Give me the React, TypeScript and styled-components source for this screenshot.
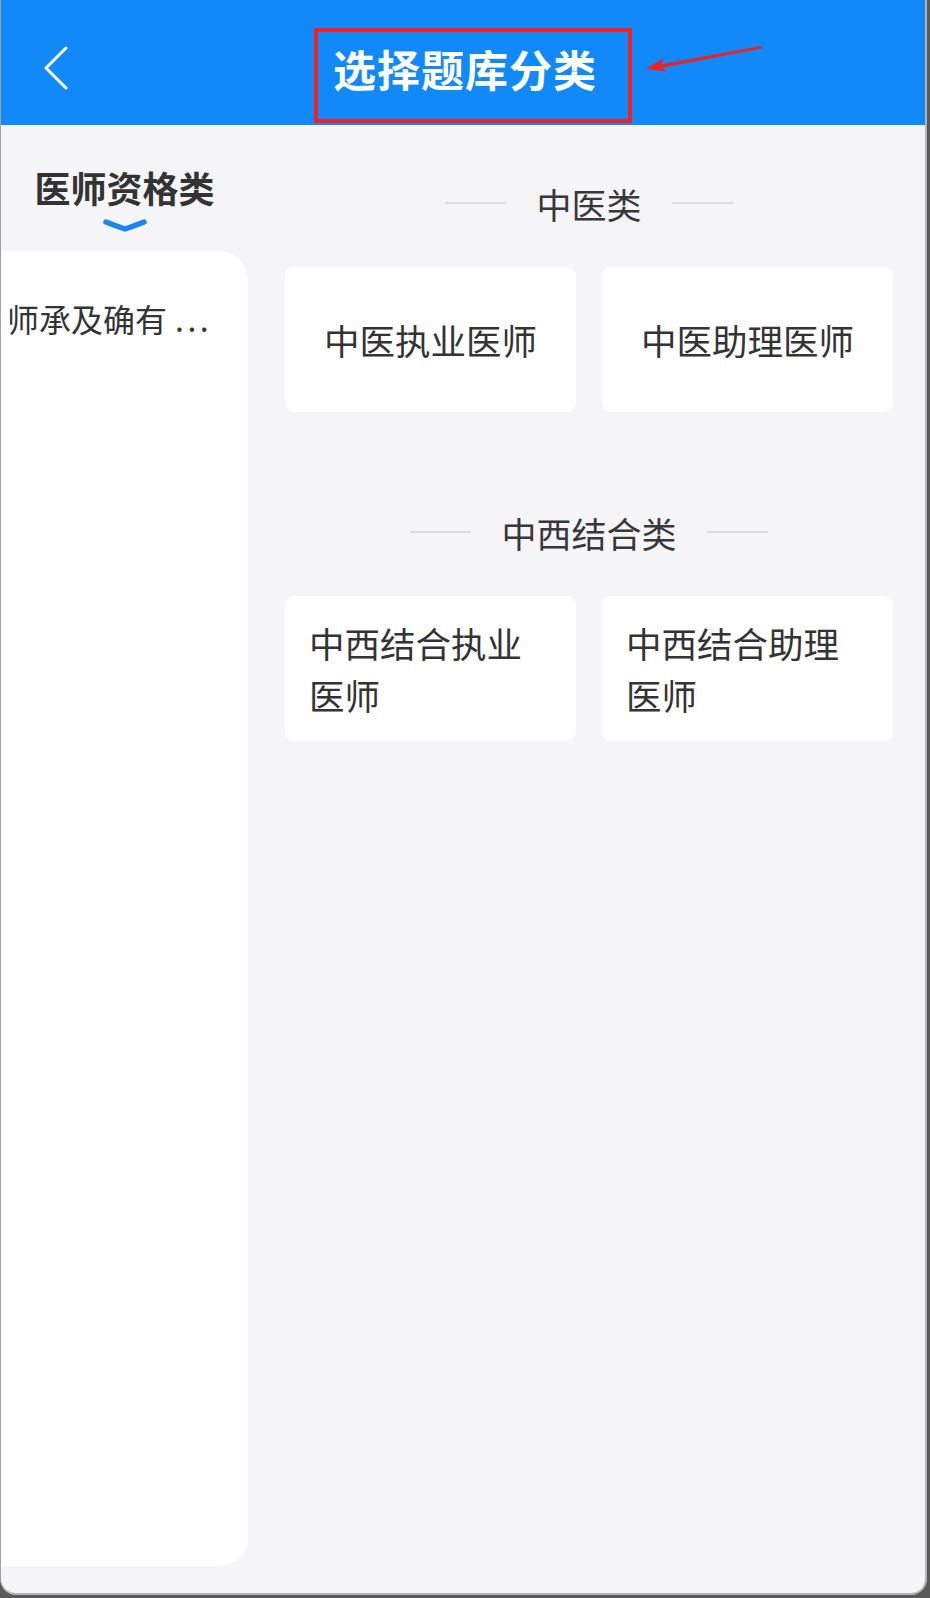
import React from "react";
import styled, { createGlobalStyle } from "styled-components";

const GlobalStyle = createGlobalStyle`
    html, body {
        margin: 0;
        padding: 0;
        background: #5a5a5a;
    }
    body {
        font-family: "Noto Sans CJK SC", "Noto Sans", sans-serif;
        color: #333;
    }
`;

const Screen = styled.div`
    position: relative;
    width: 927px;
    height: 1595px;
    box-sizing: border-box;
    background: #f5f5f7;
    border-left: 1px solid #a2a2a2;
    border-right: 2px solid #b4b4b4;
    border-bottom: 2px solid #b4b4b4;
    border-radius: 0 0 16px 16px;
    overflow: hidden;
    display: flex;
    flex-direction: column;
`;

const NavBar = styled.header`
    height: 125px;
    flex: none;
    box-sizing: border-box;
    padding-top: 10px;
    background: #1289f8;
    display: grid;
    grid-template-columns: 1fr auto 1fr;
    align-items: center;
`;

const BackButton = styled.button`
    justify-self: start;
    margin-left: 42px;
    padding: 0;
    border: none;
    background: none;
    display: flex;
    cursor: pointer;
`;

const Title = styled.h1`
    margin: 0;
    padding-left: 4px;
    font-size: 43px;
    font-weight: 700;
    line-height: 60px;
    color: #fff;
    letter-spacing: 1px;
`;

// red annotation drawn over the screenshot
const MarkBox = styled.div`
    position: absolute;
    left: 313px;
    top: 28px;
    width: 318px;
    height: 95px;
    box-sizing: border-box;
    border: 4px solid #ee2222;
`;

const MarkArrow = styled.svg`
    position: absolute;
    left: 640px;
    top: 40px;
`;

const Body = styled.div`
    flex: 1;
    display: flex;
    min-height: 0;
`;

const Sidebar = styled.aside`
    width: 247px;
    flex: none;
    display: flex;
    flex-direction: column;
    align-items: center;
    padding: 37px 0 27px;
    box-sizing: border-box;
`;

const Tab = styled.div`
    font-size: 36px;
    font-weight: 700;
    line-height: 50px;
    color: #333;
`;

const TabMark = styled.svg`
    margin-top: 5px;
    display: block;
`;

const Panel = styled.div`
    align-self: stretch;
    flex: 1;
    margin-top: 18px;
    background: #fff;
    border-radius: 0 30px 28px 0;
    padding-top: 42px;
    overflow: hidden;
`;

const PanelItem = styled.div`
    padding-left: 6px;
    font-size: 32px;
    line-height: 50px;
    color: #333;
    white-space: nowrap;
`;

const Ellipsis = styled.span`
    margin-left: 8px;
    letter-spacing: 3.5px;
`;

const Main = styled.main`
    flex: 1;
    padding: 43px 32px 0 37px;
    display: flex;
    flex-direction: column;
    gap: 85px;
`;

const Section = styled.section`
    display: flex;
    flex-direction: column;
`;

const SectionTitle = styled.div`
    height: 70px;
    display: flex;
    align-items: center;
    justify-content: center;
    gap: 30px;
    font-size: 35px;
    color: #383838;

    &::before, &::after {
        content: "";
        width: 61px;
        height: 1.5px;
        background: #dcdcdc;
    }
`;

const CardGrid = styled.div`
    margin-top: 29px;
    display: grid;
    grid-template-columns: 1fr 1fr;
    gap: 26px;
`;

const Card = styled.div`
    height: 145px;
    box-sizing: border-box;
    padding: 0 24px;
    background: #fff;
    border-radius: 9px;
    display: flex;
    align-items: center;
    justify-content: center;
`;

const CardText = styled.span`
    font-size: 35.5px;
    line-height: 52px;
    color: #333;
    text-align: left;
`;

const groups = [
    { name: "中医类", items: ["中医执业医师", "中医助理医师"] },
    { name: "中西结合类", items: ["中西结合执业医师", "中西结合助理医师"] },
];

export default function App() {
    return (
        <>
            <GlobalStyle />
            <Screen>
                <NavBar>
                    <BackButton aria-label="返回">
                        <svg width="26" height="44" viewBox="0 0 26 44">
                            <polyline points="23,2 3,22 23,42" fill="none" stroke="#fff" strokeWidth="3" strokeLinecap="round" strokeLinejoin="round" />
                        </svg>
                    </BackButton>
                    <Title>选择题库分类</Title>
                    <div />
                </NavBar>
                <Body>
                    <Sidebar>
                        <Tab>医师资格类</Tab>
                        <TabMark width="46" height="16" viewBox="0 0 46 16">
                            <path d="M4 5 Q 14 9 23 12 Q 32 9 42 5" fill="none" stroke="#1a86f0" strokeWidth="5.5" strokeLinecap="round" strokeLinejoin="round" />
                        </TabMark>
                        <Panel>
                            <PanelItem>师承及确有<Ellipsis>...</Ellipsis></PanelItem>
                        </Panel>
                    </Sidebar>
                    <Main>
                        {groups.map(g => (
                            <Section key={g.name}>
                                <SectionTitle>{g.name}</SectionTitle>
                                <CardGrid>
                                    {g.items.map(item => (
                                        <Card key={item}>
                                            <CardText>{item}</CardText>
                                        </Card>
                                    ))}
                                </CardGrid>
                            </Section>
                        ))}
                    </Main>
                </Body>
                <MarkBox />
                <MarkArrow width="125" height="40" viewBox="0 0 125 40">
                    <polygon points="120,6 121,8.5 17,28.5 16,25" fill="#ee2222" />
                    <polygon points="5,28.6 23.4,18.1 18.8,26.1 26,31.9" fill="#ee2222" />
                </MarkArrow>
            </Screen>
        </>
    );
}
